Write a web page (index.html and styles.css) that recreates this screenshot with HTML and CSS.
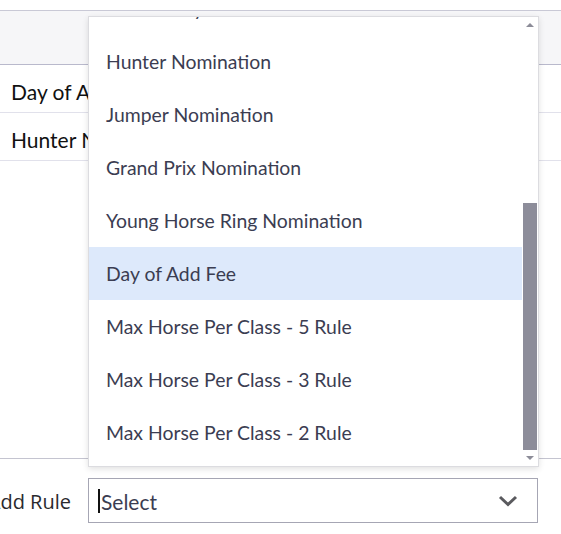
FILE: index.html
```html
<!DOCTYPE html>
<html>
<head>
<meta charset="utf-8">
<link rel="stylesheet" href="styles.css">
</head>
<body>
<div class="page">
  <div class="top-gap"></div>
  <div class="table">
    <div class="thead"></div>
    <div class="trow"><span class="cell">Day of Add Fee</span></div>
    <div class="trow"><span class="cell">Hunter Nomination</span></div>
  </div>
  <div class="spacer"></div>
  <div class="footer">
    <div class="add-rule">
      <label class="label">Add Rule</label>
      <div class="select">
        <span class="caret"></span><span class="select-text">Select</span>
        <svg class="chevron" width="20" height="12" viewBox="0 0 20 12"><path d="M2 2 L10 9.5 L18 2" fill="none" stroke="#5a5a5e" stroke-width="3"/></svg>
      </div>
    </div>
  </div>

  <div class="dropdown">
    <div class="list">
      <div class="items">
        <div class="item">Show Entry Fee</div>
        <div class="item">Hunter Nomination</div>
        <div class="item">Jumper Nomination</div>
        <div class="item">Grand Prix Nomination</div>
        <div class="item">Young Horse Ring Nomination</div>
        <div class="item active">Day of Add Fee</div>
        <div class="item">Max Horse Per Class - 5 Rule</div>
        <div class="item">Max Horse Per Class - 3 Rule</div>
        <div class="item">Max Horse Per Class - 2 Rule</div>
      </div>
    </div>
    <div class="scrollbar">
      <div class="arrow up"></div>
      <div class="track"><div class="thumb"></div></div>
      <div class="arrow down"></div>
    </div>
  </div>
</div>
</body>
</html>
```
FILE: styles.css
```css
* { box-sizing: border-box; }
html, body { margin: 0; padding: 0; background: #fff; }
body { width: 561px; height: 534px; overflow: hidden; font-family: Lato, "Open Sans", sans-serif; }
.page { position: relative; width: 561px; height: 534px; display: flex; flex-direction: column; }
.top-gap { height: 11px; border-bottom: 1px solid #c9c9d6; }
.thead { height: 54px; background: #f6f6f8; border-bottom: 1px solid #b9b9cc; }
.trow { height: 48px; border-bottom: 1px solid #e1e1eb; display: flex; align-items: center; padding-left: 11px; padding-top: 6px; }
.cell { font-size: 21px; color: #111; }
.spacer { height: 298px; border-bottom: 1px solid #c4c4d0; }
.footer { padding-top: 19px; }
.add-rule { display: flex; align-items: center; gap: 17px; margin-left: -105px; }
.label { width: 176px; text-align: right; font-family: "Open Sans", Lato, sans-serif; font-size: 20px; color: #2a2a2e; padding-top: 1px; }
.select { width: 450px; height: 45px; border: 1px solid #a6a6b4; display: flex; align-items: center; padding-left: 9px; padding-right: 19px; }
.caret { width: 2px; height: 24px; background: #111; margin-right: 1px; }
.select-text { flex: 1; font-size: 21px; color: #3b3d52; padding-top: 2px; }
.chevron { display: block; }

.dropdown { position: absolute; left: 88px; top: 16px; width: 451px; height: 451px; background: #fff; border: 1px solid #dcdce0; box-shadow: 0 2px 6px rgba(0,0,0,0.12); display: flex; }
.list { flex: 1; overflow: hidden; }
.items { margin-top: -35px; }
.item { height: 53px; display: flex; align-items: center; padding-left: 17px; font-size: 19.4px; color: #3b3d52; }
.item.active { background: #dde9fb; }
.scrollbar { width: 16px; display: flex; flex-direction: column; align-items: center; }
.arrow { width: 0; height: 0; border-left: 4px solid transparent; border-right: 4px solid transparent; margin: 6px 0; }
.arrow.up { border-bottom: 4px solid #8c8c98; }
.arrow.down { border-top: 4px solid #8c8c98; }
.track { flex: 1; width: 100%; display: flex; flex-direction: column; padding: 0 1px; }
.thumb { margin-top: 170px; height: 247px; background: #8d8d9a; }
```
